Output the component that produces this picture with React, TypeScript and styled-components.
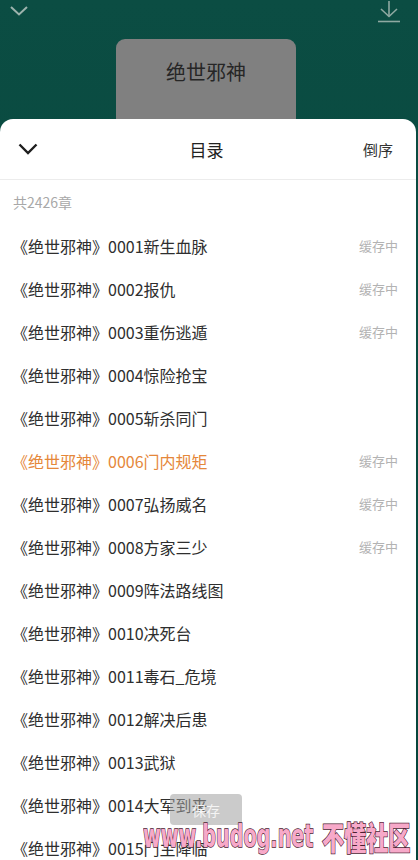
import React from "react";
import styled, { createGlobalStyle } from "styled-components";

const GlobalStyle = createGlobalStyle`
  html, body {
    margin: 0;
    padding: 0;
    background: #07463c;
  }
  body {
    font-family: "Noto Sans CJK SC", "Noto Sans", sans-serif;
  }
`;

const Screen = styled.div`
  position: relative;
  width: 418px;
  height: 860px;
  overflow: hidden;
  background: linear-gradient(180deg, #0b4d43 0%, #05443a 100%);
  display: flex;
  flex-direction: column;
`;

const TopBar = styled.div`
  flex-shrink: 0;
  height: 39px;
  display: flex;
  justify-content: space-between;
  align-items: flex-start;
  padding: 0 18px 0 10px;
  box-sizing: border-box;
`;

const TopIcon = styled.svg<{ $top: number }>`
  margin-top: ${(p) => p.$top}px;
  display: block;
`;

const Cover = styled.div`
  flex-shrink: 0;
  width: 180px;
  height: 80px;
  margin-left: 116px;
  background: #808080;
  border-radius: 9px 9px 0 0;
  display: flex;
  justify-content: center;
  padding-top: 19px;
  box-sizing: border-box;
  font-size: 20px;
  color: #262626;
  line-height: 28px;
`;

const Sheet = styled.div`
  width: 416px;
  flex: 1;
  min-height: 0;
  overflow: hidden;
  background: #fff;
  border-radius: 13px 13px 0 0;
  display: flex;
  flex-direction: column;
`;

const SheetHeader = styled.div`
  flex-shrink: 0;
  height: 60px;
  display: grid;
  grid-template-columns: 1fr auto 1fr;
  align-items: center;
  padding: 0 23px 0 18px;
  border-bottom: 1px solid #ececec;
`;

const HeaderTitle = styled.div`
  font-size: 17px;
  color: #222;
  padding-left: 2px;
`;

const HeaderAction = styled.div`
  justify-self: end;
  font-size: 15px;
  color: #333;
`;

const Count = styled.div`
  flex-shrink: 0;
  height: 44px;
  line-height: 44px;
  padding-left: 13px;
  font-size: 14px;
  color: #a8a8a8;
`;

const Row = styled.div<{ $active?: boolean }>`
  flex-shrink: 0;
  height: 43px;
  display: flex;
  align-items: center;
  justify-content: space-between;
  padding: 0 18px 0 12px;
  font-size: 16px;
  color: ${(p) => (p.$active ? "#e5873a" : "#2e2e2e")};
`;

const Status = styled.span`
  font-size: 13px;
  color: #b3b3b3;
`;

const Toast = styled.div`
  position: absolute;
  left: 170px;
  top: 794px;
  width: 72px;
  height: 31px;
  border-radius: 4px;
  background: rgba(160, 160, 160, 0.55);
  color: #f4f4f4;
  font-size: 14px;
  display: flex;
  align-items: center;
  justify-content: center;
`;

const Mark = styled.div<{ $left: number; $scale: number; $cjk?: boolean }>`
  position: absolute;
  left: ${(p) => p.$left}px;
  top: 814px;
  transform: scaleX(${(p) => p.$scale});
  transform-origin: left top;
  font-family: ${(p) => (p.$cjk ? '"Noto Sans CJK SC", sans-serif' : '"DejaVu Sans", sans-serif')};
  font-weight: 900;
  font-size: 32px;
  line-height: 44px;
  color: #f7a9c9;
  -webkit-text-stroke: 1.5px #4a2030;
  paint-order: stroke fill;
  white-space: nowrap;
`;

const chapters: { title: string; caching?: boolean; active?: boolean }[] = [
  { title: "0001新生血脉", caching: true },
  { title: "0002报仇", caching: true },
  { title: "0003重伤逃遁", caching: true },
  { title: "0004惊险抢宝" },
  { title: "0005斩杀同门" },
  { title: "0006门内规矩", caching: true, active: true },
  { title: "0007弘扬威名", caching: true },
  { title: "0008方家三少", caching: true },
  { title: "0009阵法路线图" },
  { title: "0010决死台" },
  { title: "0011毒石_危境" },
  { title: "0012解决后患" },
  { title: "0013武狱" },
  { title: "0014大军到来" },
  { title: "0015门主降临" },
];

const App = () => {
  return (
    <Screen>
      <GlobalStyle />
      <TopBar>
        <TopIcon $top={6} width="18" height="10" viewBox="0 0 18 10">
          <polyline points="1,1 9,8.5 17,1" fill="none" stroke="#9db3ad" strokeWidth="2" />
        </TopIcon>
        <TopIcon $top={1} width="22" height="22" viewBox="0 0 22 22">
          <line x1="11" y1="0" x2="11" y2="15" stroke="#8fa9a2" strokeWidth="1.6" />
          <polyline points="3,8 11,15.5 19,8" fill="none" stroke="#8fa9a2" strokeWidth="1.6" />
          <line x1="0" y1="20.5" x2="22" y2="20.5" stroke="#8fa9a2" strokeWidth="1.6" />
        </TopIcon>
      </TopBar>
      <Cover>绝世邪神</Cover>
      <Sheet>
        <SheetHeader>
          <svg width="20" height="12" viewBox="0 0 20 12">
            <polyline points="1.5,1.5 10,10 18.5,1.5" fill="none" stroke="#1f1f1f" strokeWidth="2.4" />
          </svg>
          <HeaderTitle>目录</HeaderTitle>
          <HeaderAction>倒序</HeaderAction>
        </SheetHeader>
        <Count>共2426章</Count>
        {chapters.map((c) => (
          <Row key={c.title} $active={c.active}>
            <span>《绝世邪神》{c.title}</span>
            {c.caching && <Status>缓存中</Status>}
          </Row>
        ))}
      </Sheet>
      <Toast>保存</Toast>
      <Mark $left={143} $scale={0.6}>www.budog.net</Mark>
      <Mark $left={322} $scale={0.69} $cjk>
        不懂社区
      </Mark>
    </Screen>
  );
};

export default App;
